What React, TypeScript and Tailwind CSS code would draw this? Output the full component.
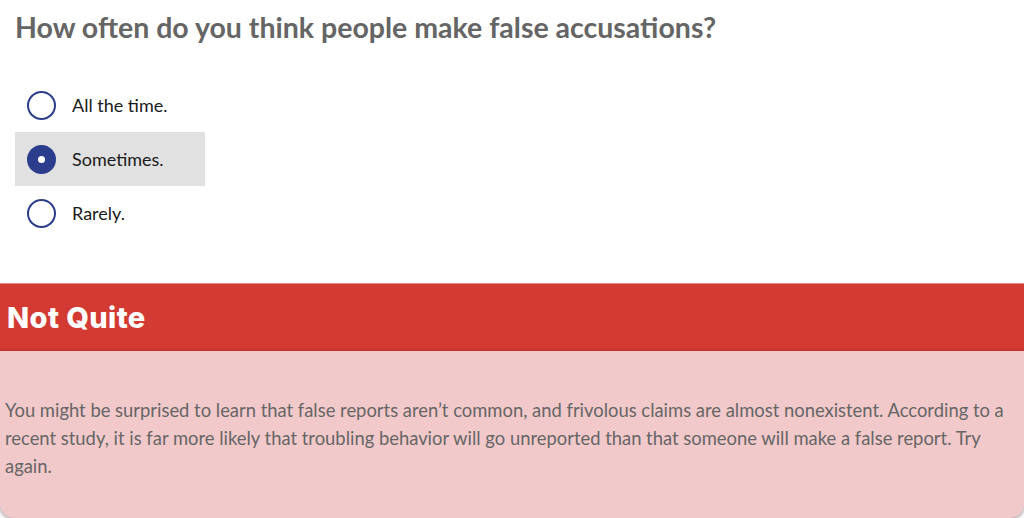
import React from 'react'

const options = ['All the time.', 'Sometimes.', 'Rarely.']

const Radio: React.FC<{ checked: boolean }> = ({ checked }) =>
  checked ? (
    <span className="w-[29px] h-[29px] rounded-full bg-[#2b3d8c] flex items-center justify-center shrink-0">
      <span className="w-[7px] h-[7px] rounded-full bg-white" />
    </span>
  ) : (
    <span className="w-[29px] h-[29px] rounded-full border-2 border-[#2b3d8c] bg-white shrink-0" />
  )

export default function App() {
  const selected = 1

  return (
    <div className="w-[1024px] h-[518px] overflow-hidden bg-white flex flex-col font-['Lato',sans-serif]">
      {/* Question */}
      <div className="pl-[15px] pt-[9px]">
        <h1 className="text-[28.5px] leading-[36px] font-bold text-[#656565]">
          How often do you think people make false accusations?
        </h1>
        <div className="mt-[33px] flex flex-col">
          {options.map((opt, i) => (
            <div
              key={opt}
              className={`w-[190px] h-[54px] flex items-center pl-[12px] gap-[16px] ${i === selected ? 'bg-[#e1e1e1]' : ''}`}
            >
              <Radio checked={i === selected} />
              <span className="text-[18px] text-[#1a1a1a]">{opt}</span>
            </div>
          ))}
        </div>
      </div>

      {/* Feedback */}
      <div className="mt-[43px] flex-1 flex flex-col">
        <div className="h-[68px] bg-[#d33a32] border-t border-[#e58a84] flex items-center pl-[7px]">
          <h2 className="text-[29px] font-extrabold text-white tracking-[0.4px] font-['Inter',sans-serif]">Not Quite</h2>
        </div>
        <div className="flex-1 bg-[#f2c9ca] rounded-b-[14px] shadow-[0_1px_4px_rgba(0,0,0,0.45)] px-[5px] pt-[45px]">
          <p className="text-[18.4px] leading-[28px] text-[#666]">
            You might be surprised to learn that false reports aren’t common, and frivolous claims are almost nonexistent. According to a recent study, it is far more likely that troubling behavior will go unreported than that someone will make a false report. Try again.
          </p>
        </div>
      </div>
    </div>
  )
}
